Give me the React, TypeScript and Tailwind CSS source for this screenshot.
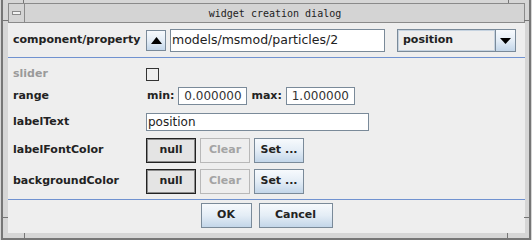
import React from 'react';

function Label({ children, dim }: { children: React.ReactNode; dim?: boolean }) {
  return (
    <div className={`w-[133px] shrink-0 text-[11px] font-bold ${dim ? 'text-[#9a9a9a]' : 'text-[#222]'}`}>
      {children}
    </div>
  );
}

function BlueButton({ children, className = '' }: { children: React.ReactNode; className?: string }) {
  return (
    <div
      className={`flex items-center justify-center border border-[#7a8a99] bg-gradient-to-b from-[#f7fafd] via-[#e4edf6] to-[#c3d6e9] text-[11px] font-bold text-[#222] ${className}`}
    >
      {children}
    </div>
  );
}

function ColorRow({ label }: { label: string }) {
  return (
    <div className="flex h-[25px] items-center">
      <Label>{label}</Label>
      <div className="flex h-[25px] w-[50px] items-center justify-center border border-[#222] bg-[#e4e4e4] text-[11px] font-bold text-[#222] shadow-[inset_0_0_0_1px_#8c8c8c]">
        null
      </div>
      <div className="ml-[4px] flex h-[25px] w-[50px] items-center justify-center border border-[#b8b8b8] bg-[#eeeeee] text-[11px] font-bold text-[#a4a4a4]">
        Clear
      </div>
      <BlueButton className="ml-[4px] h-[25px] w-[50px]">Set ...</BlueButton>
    </div>
  );
}

export default function App() {
  return (
    <div className="h-[240px] w-[532px] overflow-hidden bg-[#d6d6d6] pl-px font-['DejaVu_Sans',sans-serif]">
      <div className="relative flex h-[240px] w-[530px] flex-col border-b-2 border-l-2 border-r-2 border-[#767676] pb-[5px] pl-[5px] pr-[4px] pt-[3px]">
        {/* frame corner notches */}
        <div className="absolute left-[20px] top-0 h-[3px] w-px bg-[#767676]" />
        <div className="absolute right-[20px] top-0 h-[3px] w-px bg-[#767676]" />
        <div className="absolute bottom-[-2px] left-[21px] h-[7px] w-px bg-[#767676]" />
        <div className="absolute bottom-[-2px] right-[21px] h-[7px] w-px bg-[#767676]" />
        <div className="absolute left-[-2px] top-[20px] h-px w-[7px] bg-[#767676]" />
        <div className="absolute right-[-2px] top-[20px] h-px w-[7px] bg-[#767676]" />
        <div className="absolute bottom-[20px] left-[-2px] h-px w-[7px] bg-[#767676]" />
        <div className="absolute bottom-[20px] right-[-2px] h-px w-[7px] bg-[#767676]" />

        {/* title bar */}
        <div className="flex h-[20px] w-[517px] shrink-0 border border-[#8a8a8a] bg-[#d4d4d4]">
          <div className="flex w-[16px] items-center justify-center border-r border-[#8a8a8a]">
            <div className="h-[4px] w-[9px] border border-[#8a8a8a] bg-[#f2f2f2]" />
          </div>
          <div className="flex flex-1 items-center justify-center pl-[1px] font-['DejaVu_Sans_Mono',monospace] text-[10px] text-[#222]">
            widget creation dialog
          </div>
        </div>

        {/* content */}
        <div className="flex w-[517px] flex-1 flex-col bg-[#eeeeee] pl-[5px]">
          <div className="mt-[6px] flex h-[23px] items-center">
            <Label>component/property</Label>
            <BlueButton className="h-[21px] w-[20px]">
              <svg width="11" height="7" viewBox="0 0 11 7">
                <path d="M0 7 L5.5 0 L11 7 Z" fill="#000" />
              </svg>
            </BlueButton>
            <div className="ml-[4px] flex h-[23px] w-[215px] items-center border border-[#7a8a99] bg-white pl-[1px] text-[12.5px] text-[#222]">
              models/msmod/particles/2
            </div>
            <div className="ml-[12px] flex h-[23px] w-[119px] border border-[#7a8a99] bg-[#eeeeee]">
              <div className="flex flex-1 items-center border border-[#c6d3e0] pl-[4px] text-[11px] font-bold text-[#222]">
                position
              </div>
              <div className="flex w-[20px] items-center justify-center border-l border-[#7a8a99] bg-gradient-to-b from-[#f7fafd] via-[#e4edf6] to-[#c3d6e9]">
                <svg width="11" height="6" viewBox="0 0 11 6">
                  <path d="M0 0 L11 0 L5.5 6 Z" fill="#000" />
                </svg>
              </div>
            </div>
          </div>

          <div className="-ml-[5px] mt-[5px] h-px w-[517px] bg-[#7092d0]" />

          <div className="mt-[5px] flex h-[23px] items-center">
            <Label dim>slider</Label>
            <div className="h-[13px] w-[13px] border border-[#333] bg-[#eeeeee]" />
          </div>

          <div className="flex h-[20px] items-center">
            <Label>range</Label>
            <div className="ml-px text-[11px] font-bold text-[#222]">min:</div>
            <div className="ml-[4px] flex h-[18px] w-[69px] items-center justify-center border border-[#7a8a99] bg-white text-[12px] text-[#333]">
              0.000000
            </div>
            <div className="ml-[4px] text-[11px] font-bold text-[#222]">max:</div>
            <div className="ml-[4px] flex h-[18px] w-[69px] items-center justify-center border border-[#7a8a99] bg-white text-[12px] text-[#333]">
              1.000000
            </div>
          </div>

          <div className="mt-[5px] flex h-[22px] items-center">
            <Label>labelText</Label>
            <div className="flex h-[18px] w-[223px] items-center border border-[#7a8a99] bg-white pl-px text-[12px] text-[#222]">
              position
            </div>
          </div>

          <div className="mt-[5px]">
            <ColorRow label="labelFontColor" />
          </div>
          <div className="mt-[6px]">
            <ColorRow label="backgroundColor" />
          </div>

          <div className="-ml-[5px] mt-[5px] h-px w-[517px] bg-[#7092d0]" />

          <div className="-ml-[5px] mt-[3px] flex justify-center gap-[7px]">
            <BlueButton className="h-[25px] w-[51px]">OK</BlueButton>
            <BlueButton className="h-[25px] w-[74px]">Cancel</BlueButton>
          </div>
        </div>
      </div>
    </div>
  );
}
